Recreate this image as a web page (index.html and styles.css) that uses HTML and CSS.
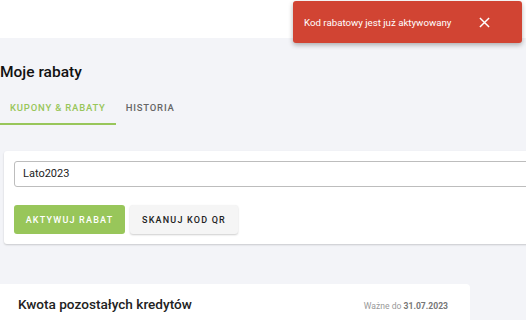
FILE: index.html
```html
<!DOCTYPE html>
<html lang="pl">
<head>
  <meta charset="UTF-8">
  <meta name="viewport" content="width=device-width, initial-scale=1.0">
  <title>Moje rabaty</title>
  <link rel="stylesheet" href="styles.css">
</head>
<body>
  <div class="header"></div>

  <div class="main">
    <h1 class="title">Moje rabaty</h1>

    <div class="tabs">
      <div class="tab active">Kupony &amp; rabaty</div>
      <div class="tab">Historia</div>
    </div>

    <div class="card">
      <div class="input">Lato2023</div>
      <div class="actions">
        <button class="btn btn-green">Aktywuj rabat</button>
        <button class="btn btn-light">Skanuj kod QR</button>
      </div>
    </div>

    <div class="credits">
      <div class="credits-title">Kwota pozostałych kredytów</div>
      <div class="credits-date">Ważne do <b>31.07.2023</b></div>
    </div>
  </div>

  <div class="toast">
    <span>Kod rabatowy jest już aktywowany</span>
    <svg class="toast-close" width="11" height="11" viewBox="0 0 12 12">
      <path d="M1 1 L11 11 M11 1 L1 11" stroke="#fff" stroke-width="1.6" fill="none"/>
    </svg>
  </div>
</body>
</html>
```

FILE: styles.css
```css
* {
  box-sizing: border-box;
}

body {
  margin: 0;
  height: 320px;
  font-family: Roboto, "Liberation Sans", sans-serif;
  background: #f3f4f8;
  color: #1d1d1f;
  overflow: hidden;
}

.header {
  height: 38px;
  background: #fff;
}

.main {
  padding-top: 25px;
}

.title {
  margin: 0;
  font-size: 15.5px;
  font-weight: 500;
  line-height: 18px;
  color: #111;
}

.tabs {
  display: flex;
  margin-top: 12px;
}

.tab {
  padding: 0 10px;
  height: 32px;
  line-height: 30px;
  font-size: 9.5px;
  font-weight: 500;
  letter-spacing: 0.8px;
  text-transform: uppercase;
  color: #666;
}

.tab.active {
  color: #98c65a;
  border-bottom: 2px solid #98c65a;
}

.card {
  margin: 26px 0 0 4px;
  width: 540px;
  padding: 10px;
  background: #fff;
  border-radius: 3px;
  box-shadow: 0 1px 2px rgba(0, 0, 0, 0.18);
}

.input {
  height: 26px;
  border: 1px solid #bdbdbd;
  border-radius: 3px;
  padding: 0 8px;
  line-height: 24px;
  font-size: 11px;
  color: #222;
}

.actions {
  display: flex;
  gap: 5px;
  margin-top: 18px;
}

.btn {
  height: 29px;
  border: none;
  border-radius: 3px;
  font-family: inherit;
  font-size: 9px;
  font-weight: 500;
  letter-spacing: 1.2px;
  text-transform: uppercase;
}

.btn-green {
  width: 111px;
  background: #98c65a;
  color: #fff;
}

.btn-light {
  width: 108px;
  background: #f5f5f5;
  color: #222;
  box-shadow: 0 1px 2px rgba(0, 0, 0, 0.2);
}

.credits {
  margin-top: 40px;
  width: 470px;
  height: 60px;
  padding: 12px 22px 0 18px;
  background: #fff;
  border-radius: 0 4px 0 0;
  display: flex;
  justify-content: space-between;
  align-items: baseline;
}

.credits-title {
  font-size: 13.6px;
  font-weight: 500;
  color: #222;
}

.credits-date {
  font-size: 8.6px;
  color: #999;
}

.credits-date b {
  color: #777;
}

.toast {
  position: absolute;
  top: 1px;
  left: 293px;
  width: 229px;
  height: 42px;
  padding: 0 32px 0 11px;
  display: flex;
  align-items: center;
  justify-content: space-between;
  background: #d14433;
  color: #fff;
  font-size: 9.7px;
  border-radius: 3px;
  box-shadow: 0 2px 5px rgba(0, 0, 0, 0.3);
}
```
